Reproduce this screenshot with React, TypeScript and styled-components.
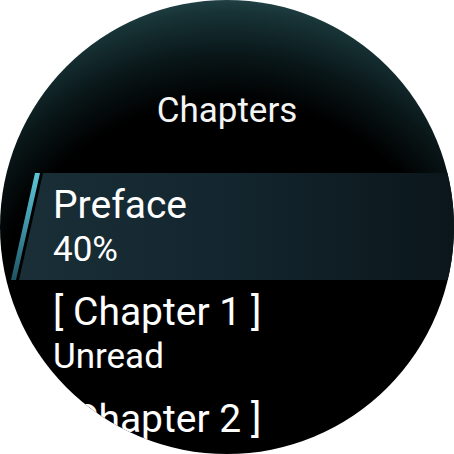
import styled, { createGlobalStyle } from "styled-components";

type Chapter = {
    title: string;
    status: string;
    selected?: boolean;
}

const chapters: Chapter[] = [
    { title: "Preface", status: "40%", selected: true },
    { title: "[ Chapter 1 ]", status: "Unread" },
    { title: "[ Chapter 2 ]", status: "Unread" },
];

export default function App() {
    return (
        <>
            <GlobalStyle />
            <Screen>
                <Header>Chapters</Header>
                <List>
                    {chapters.map((c) => (
                        <Row key={c.title} selected={!!c.selected}>
                            <Title>{c.title}</Title>
                            <Status>{c.status}</Status>
                        </Row>
                    ))}
                </List>
            </Screen>
        </>
    )
}

const GlobalStyle = createGlobalStyle`
    html, body {
        margin: 0;
        padding: 0;
        background: #fff;
    }
    body {
        font-family: Roboto, "Noto Sans", sans-serif;
    }
`
const Screen = styled.div`
    width: 454px;
    height: 454px;
    border-radius: 50%;
    overflow: hidden;
    display: flex;
    flex-direction: column;
    background: radial-gradient(circle at 50% 75%, #000 0, #000 240px, #091618 285px, #183437 330px, #24454a 345px);
`
const Header = styled.h1`
    flex: none;
    margin: 0;
    padding-top: 91px;
    height: 173px;
    box-sizing: border-box;
    text-align: center;
    font-size: 35px;
    font-weight: 400;
    line-height: 40px;
    color: #f4f4f4;
`
const List = styled.ul`
    list-style: none;
    margin: 0;
    padding: 0;
    display: flex;
    flex-direction: column;
`
const Row = styled.li<{ selected: boolean }>`
    position: relative;
    flex: none;
    height: 107px;
    box-sizing: border-box;
    padding: 10px 0 0 53px;
    display: flex;
    flex-direction: column;
    color: #fff;
    &::before {
        content: "";
        display: ${({ selected }) => (selected ? "block" : "none")};
        position: absolute;
        inset: 0;
        background: linear-gradient(90deg, #1a2f37 0%, #142730 45%, #0b161b 100%);
        clip-path: polygon(43px 0, 100% 0, 100% 100%, 19px 100%);
    }
    &::after {
        content: "";
        display: ${({ selected }) => (selected ? "block" : "none")};
        position: absolute;
        inset: 0;
        background: linear-gradient(180deg, #5cc6d6 0%, #3e94a6 50%, #1d5361 100%);
        clip-path: polygon(35px 0, 40px 0, 16px 100%, 11px 100%);
    }
`
const Title = styled.span`
    position: relative;
    z-index: 1;
    font-size: 39px;
    line-height: 44px;
    white-space: nowrap;
`
const Status = styled.span`
    position: relative;
    z-index: 1;
    font-size: 35px;
    line-height: 46px;
    white-space: nowrap;
`
